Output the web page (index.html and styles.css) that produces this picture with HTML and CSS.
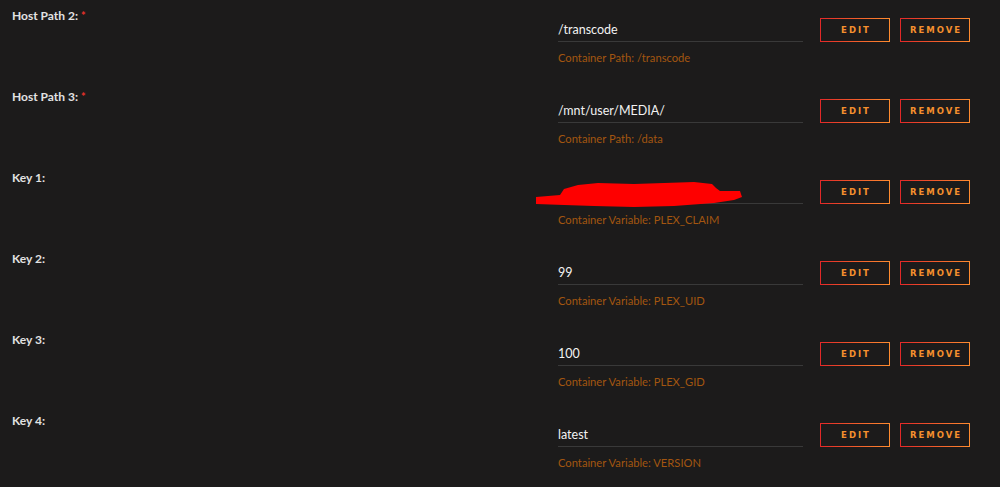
FILE: index.html
```html
<!DOCTYPE html>
<html>

<head>
    <meta charset="utf-8" />
    <title>Container settings</title>
    <link rel="stylesheet" href="styles.css">
</head>

<body>
    <div class="settings">
        <div class="row">
            <div class="label">Host Path 2: <span class="req">*</span></div>
            <div class="field">
                <div class="value">/transcode</div>
                <div class="hint">Container Path: /transcode</div>
            </div>
            <div class="actions">
                <button class="btn">Edit</button>
                <button class="btn">Remove</button>
            </div>
        </div>
        <div class="row">
            <div class="label">Host Path 3: <span class="req">*</span></div>
            <div class="field">
                <div class="value">/mnt/user/MEDIA/</div>
                <div class="hint">Container Path: /data</div>
            </div>
            <div class="actions">
                <button class="btn">Edit</button>
                <button class="btn">Remove</button>
            </div>
        </div>
        <div class="row">
            <div class="label">Key 1:</div>
            <div class="field">
                <div class="value"></div>
                <!-- token value hidden behind a marker stroke -->
                <svg class="scribble" width="220" height="30" viewBox="0 0 220 30">
                    <path d="M2 16 L26 14 L30 8 L44 4 L64 2 L100 3 L130 2 L160 1 L178 3 L182 7 L186 10 L206 10 L208 16 L200 19 L180 22 L140 25 L100 26 L60 25 L30 24 L2 23 Z" fill="#fe0000" />
                    <path d="M116 6 L150 2 L176 4 L178 14 L150 22 L116 20 Z" fill="#fe0000" />
                </svg>
                <div class="hint">Container Variable: PLEX_CLAIM</div>
            </div>
            <div class="actions">
                <button class="btn">Edit</button>
                <button class="btn">Remove</button>
            </div>
        </div>
        <div class="row">
            <div class="label">Key 2:</div>
            <div class="field">
                <div class="value">99</div>
                <div class="hint">Container Variable: PLEX_UID</div>
            </div>
            <div class="actions">
                <button class="btn">Edit</button>
                <button class="btn">Remove</button>
            </div>
        </div>
        <div class="row">
            <div class="label">Key 3:</div>
            <div class="field">
                <div class="value">100</div>
                <div class="hint">Container Variable: PLEX_GID</div>
            </div>
            <div class="actions">
                <button class="btn">Edit</button>
                <button class="btn">Remove</button>
            </div>
        </div>
        <div class="row">
            <div class="label">Key 4:</div>
            <div class="field">
                <div class="value">latest</div>
                <div class="hint">Container Variable: VERSION</div>
            </div>
            <div class="actions">
                <button class="btn">Edit</button>
                <button class="btn">Remove</button>
            </div>
        </div>
    </div>
</body>

</html>
```

FILE: styles.css
```css
body {
    margin: 0;
    padding: 0;
    background: #1c1b1b;
    font-family: "Open Sans", "Liberation Sans", sans-serif;
    overflow: hidden;
}

.settings {
    padding-top: 5px;
}

.row {
    display: grid;
    grid-template-columns: 546px 245px auto;
    height: 81px;
    padding-left: 12px;
}

.label {
    margin-top: 3px;
    font-family: Lato, "Open Sans", sans-serif;
    font-size: 12px;
    line-height: 16px;
    font-weight: 700;
    color: #e2e2e2;
}

.label .req {
    color: #e8302a;
    font-size: 11px;
    vertical-align: top;
}

.field {
    position: relative;
    margin-top: 14px;
}

.value {
    height: 22px;
    line-height: 22px;
    border-bottom: 1px solid #393939;
    font-family: Lato, "Open Sans", sans-serif;
    font-size: 12.5px;
    color: #f2f2f2;
}

.hint {
    margin-top: 9px;
    font-family: Lato, "Open Sans", sans-serif;
    font-size: 11.2px;
    line-height: 14px;
    color: #a35610;
}

.scribble {
    position: absolute;
    left: -24px;
    top: 0;
}

.actions {
    display: flex;
    gap: 10px;
    margin-top: 13px;
    margin-left: 17px;
    align-items: flex-start;
}

.btn {
    width: 70px;
    height: 24px;
    padding: 0 0 0 2px;
    background: transparent;
    border: 1px solid;
    border-image: linear-gradient(90deg, #e22828 0, #ff8c2f) 1;
    color: #f5902e;
    font-family: "DejaVu Sans", sans-serif;
    font-size: 8.5px;
    font-weight: 700;
    letter-spacing: 2px;
    text-transform: uppercase;
    cursor: pointer;
}
```
